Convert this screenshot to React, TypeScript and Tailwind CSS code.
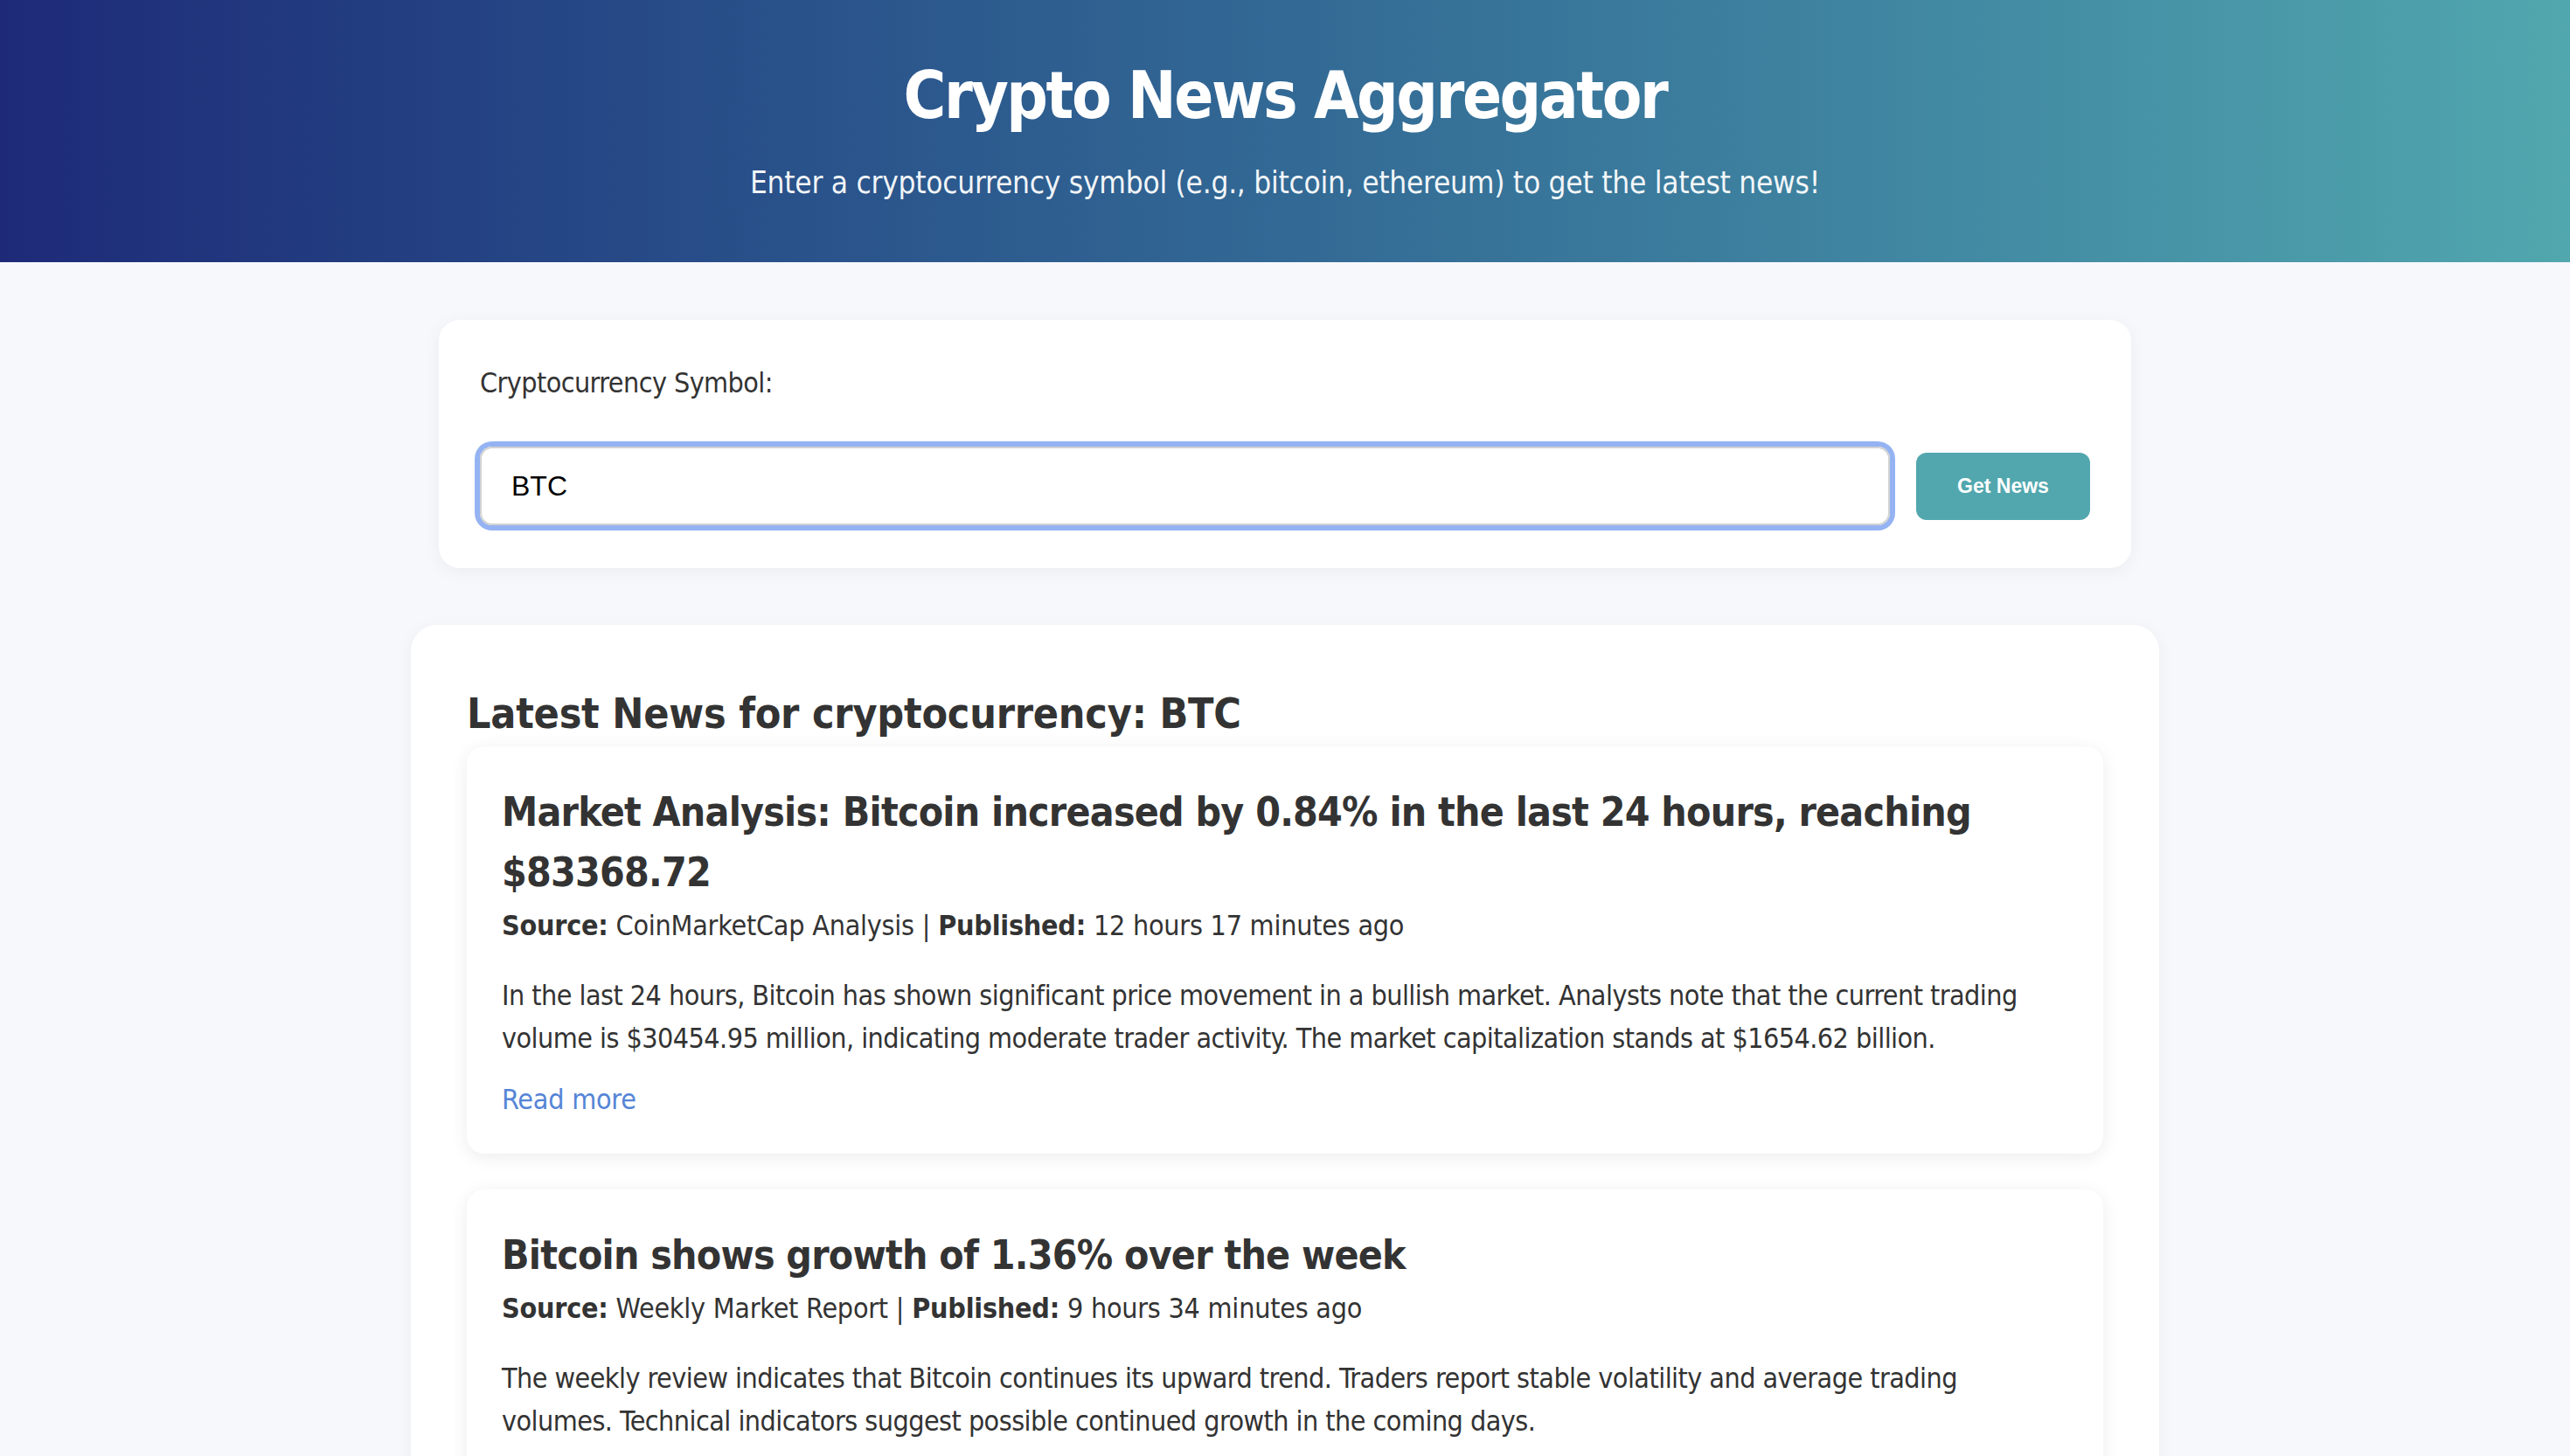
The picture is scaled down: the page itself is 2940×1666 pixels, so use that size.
import React from "react";

type Article = {
  title: string;
  source: string;
  published: string;
  description: string;
  url: string;
};

const articles: Article[] = [
  {
    title: "Market Analysis: Bitcoin increased by 0.84% in the last 24 hours, reaching $83368.72",
    source: "CoinMarketCap Analysis",
    published: "12 hours 17 minutes ago",
    description:
      "In the last 24 hours, Bitcoin has shown significant price movement in a bullish market. Analysts note that the current trading volume is $30454.95 million, indicating moderate trader activity. The market capitalization stands at $1654.62 billion.",
    url: "#",
  },
  {
    title: "Bitcoin shows growth of 1.36% over the week",
    source: "Weekly Market Report",
    published: "9 hours 34 minutes ago",
    description:
      "The weekly review indicates that Bitcoin continues its upward trend. Traders report stable volatility and average trading volumes. Technical indicators suggest possible continued growth in the coming days.",
    url: "#",
  },
];

function NewsCard({ article }: { article: Article }) {
  return (
    <div className="bg-white rounded-[20px] px-[40px] pt-[41px] pb-[38px] shadow-[0_4px_20px_rgba(0,0,0,0.08)]">
      <h3 className="text-[46px] leading-[69px] font-bold text-[#333] mb-[2px] tracking-[-0.017em]">{article.title}</h3>
      <p className="text-[32px] leading-[48px] text-[#333]">
        <strong>Source:</strong> {article.source} | <strong>Published:</strong> {article.published}
      </p>
      <p className="mt-[32px] mb-[21px] text-[32px] leading-[49px] text-[#333] tracking-[-0.017em]">
        {article.description}
      </p>
      <a href={article.url} className="text-[32px] leading-[48px] text-[#5585d6]">
        Read more
      </a>
    </div>
  );
}

export default function App() {
  return (
    <div
      className="min-h-screen bg-[#f7f8fc] pb-[80px] tracking-[-0.015em]"
      style={{ fontFamily: '"DejaVu Sans Condensed", "DejaVu Sans", Verdana, sans-serif' }}
    >
      {/* Header */}
      <header className="h-[300px] bg-gradient-to-r from-[#1e2a78] to-[#51a7ae] flex flex-col items-center text-white">
        <h1 className="mt-[66px] text-[74px] leading-[86px] font-bold tracking-[-0.033em]">Crypto News Aggregator</h1>
        <p className="mt-[34px] text-[35px] leading-[46px] text-white/95 tracking-[-0.008em]">
          Enter a cryptocurrency symbol (e.g., bitcoin, ethereum) to get the latest news!
        </p>
      </header>

      <main className="max-w-[2000px] mx-auto">
        {/* Search */}
        <div className="mx-[32px] mt-[66px] bg-white rounded-[24px] px-[47px] pt-[48px] pb-[49px] shadow-[0_4px_20px_rgba(0,0,0,0.05)]">
          <label className="block text-[32px] leading-[48px] text-[#333] tracking-[-0.018em]">Cryptocurrency Symbol:</label>
          <div className="mt-[49px] flex items-center gap-[30px]">
            <input
              defaultValue="BTC"
              className="flex-1 h-[90px] px-[34px] rounded-[14px] border-2 border-[#d2d2d2] ring-[6px] ring-[#95b3f3] outline-none text-[32px] text-black tracking-normal"
              style={{ fontFamily: '"Liberation Sans", Arial, sans-serif' }}
            />
            <button
              className="w-[199px] h-[77px] rounded-[12px] bg-[#52a7ae] text-white text-[23px] font-bold tracking-normal"
              style={{ fontFamily: '"Liberation Sans", Arial, sans-serif' }}
            >
              Get News
            </button>
          </div>
        </div>

        {/* Results */}
        <div className="mt-[65px] bg-white rounded-[30px] px-[64px] pt-[72px] pb-[64px] shadow-[0_4px_20px_rgba(0,0,0,0.05)]">
          <h2 className="text-[48px] leading-[58px] font-bold text-[#333] mb-[9px]">
            Latest News for cryptocurrency: BTC
          </h2>
          <div className="flex flex-col gap-[41px]">
            {articles.map((a) => (
              <NewsCard key={a.title} article={a} />
            ))}
          </div>
        </div>
      </main>
    </div>
  );
}
